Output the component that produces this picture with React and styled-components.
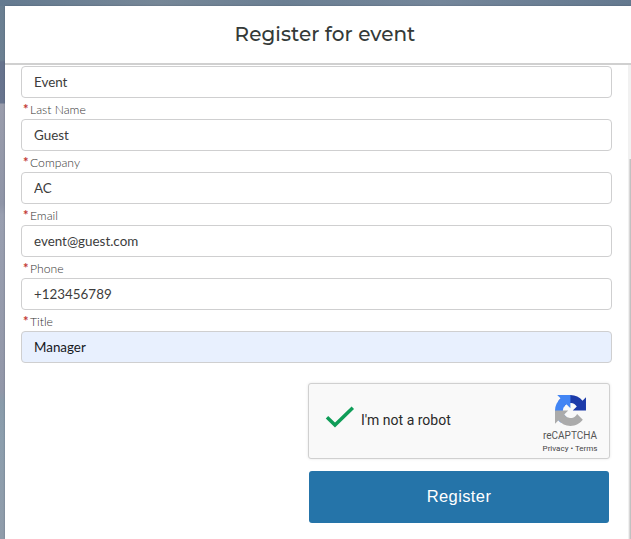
import React from "react";
import styled, { createGlobalStyle } from "styled-components";

const GlobalStyle = createGlobalStyle`
  * { box-sizing: border-box; }
  html, body { margin: 0; height: 100%; overflow: hidden; }
`;

const Backdrop = styled.div`
  width: 631px;
  height: 539px;
  padding: 6px 0 0 5px;
  overflow: hidden;
  background:
    linear-gradient(90deg, #647a90, #768797 25%, #6b7f93 45%, #74869a 70%, #64798f) top / 100% 6px no-repeat,
    linear-gradient(#697e91 0, #6c8092 60px, #66738d 62px, #68748e 103px, #9a9dac 104px, #8f95a7 204px, #999fb0 215px, #9297a8 390px, #899baa 403px, #8c9ead 440px, #909caa 539px);
`;

const Modal = styled.div`
  height: 533px;
  display: flex;
  flex-direction: column;
  background: #fff;
  box-shadow: 0 0 2px rgba(40, 50, 70, 0.35);
`;

const Header = styled.header`
  flex: none;
  height: 59px;
  display: flex;
  justify-content: center;
  border-bottom: 2px solid #d0d0d0;
`;

const Title = styled.h2`
  margin: 14px 0 0 14px;
  font: 500 20px/28px Montserrat, Inter, sans-serif;
  letter-spacing: 0.04px;
  color: #343a38;
  white-space: nowrap;
`;

const Body = styled.div`
  flex: 1;
  display: flex;
  justify-content: space-between;
`;

const Form = styled.form`
  width: 591px;
  margin: 1px 0 0 16px;
  display: flex;
  flex-direction: column;
`;

const Field = styled.label`
  display: block;
`;

const Label = styled.span`
  display: flex;
  height: 21px;
  padding-left: 2px;
  font: 300 12.2px/23px Lato, sans-serif;
  color: #333;
`;

const Required = styled.span`
  width: 7px;
  font-weight: 700;
  font-size: 13px;
  color: #c23934;
`;

const Input = styled.input`
  display: block;
  width: 100%;
  height: 32px;
  padding: 0 12px 1px;
  border: 1px solid #cfcfd0;
  border-radius: 4px;
  outline: none;
  background: ${({ $filled }) => ($filled ? "#e8f0fe" : "#fff")};
  color: ${({ $filled }) => ($filled ? "#16181d" : "#3c3c3c")};
  font: 400 13.4px/20px Lato, sans-serif;
`;

const Actions = styled.div`
  width: 304px;
  margin: 20px 0 0 287px;
  display: flex;
  flex-direction: column;
  align-items: flex-start;
  gap: 12px;
`;

const Captcha = styled.div`
  width: 302px;
  height: 76px;
  display: flex;
  border: 1px solid #d0d0d0;
  border-radius: 3px;
  background: #f9f9f9;
  box-shadow: 0 0 3px rgba(0, 0, 0, 0.1);
`;

const Check = styled.svg`
  flex: none;
  width: 30px;
  height: 24px;
  margin: 21px 0 0 16px;
`;

const CaptchaText = styled.span`
  flex: 1;
  margin: 26px 0 0 6px;
  font: 400 14px/20px Roboto, sans-serif;
  color: #2a2a2a;
`;

const Brand = styled.div`
  width: 78px;
  display: flex;
  flex-direction: column;
  align-items: center;
  font-family: Roboto, sans-serif;
  color: #555;
`;

const Logo = styled.svg`
  width: 31px;
  height: 31px;
  margin-top: 11px;
`;

const BrandName = styled.span`
  margin-top: 3px;
  font-size: 10px;
  line-height: 14px;
`;

const Links = styled.span`
  margin-top: 1px;
  font-size: 8px;
  line-height: 10px;
  white-space: nowrap;
  color: #444;
`;

const Submit = styled.button`
  width: 300px;
  height: 52px;
  margin-left: 1px;
  padding: 0 0 3px;
  border: 0;
  border-radius: 3px;
  background: #2574a9;
  color: #fff;
  font: 400 16.5px/24px "Liberation Sans", Arial, sans-serif;
  letter-spacing: 0.4px;
`;

const ScrollTrack = styled.div`
  width: 3px;
  padding: 94px 0 0 1px;
  background: #f1f1f1;
`;

const ScrollThumb = styled.div`
  height: 100%;
  background: #c1c1c1;
  border-left: 1px solid #d8d8d8;
`;

const fields = [
  { value: "Event" },
  { label: "Last Name", value: "Guest" },
  { label: "Company", value: "AC" },
  { label: "Email", value: "event@guest.com" },
  { label: "Phone", value: "+123456789" },
  { label: "Title", value: "Manager", filled: true },
];

export default function App() {
  return (
    <>
      <GlobalStyle />
      <Backdrop>
        <Modal>
          <Header>
            <Title>Register for event</Title>
          </Header>
          <Body>
            <Form onSubmit={(e) => e.preventDefault()}>
              {fields.map(({ label, value, filled }) => (
                <Field key={value}>
                  {label && (
                    <Label>
                      <Required>*</Required>
                      {label}
                    </Label>
                  )}
                  <Input defaultValue={value} $filled={filled} />
                </Field>
              ))}
              <Actions>
                <Captcha>
                  <Check viewBox="0 0 30 24">
                    <path d="M2 12.2 10 20 27.8 2.8" fill="none" stroke="#0f9d58" strokeWidth="3.5" />
                  </Check>
                  <CaptchaText>I'm not a robot</CaptchaText>
                  <Brand>
                    <Logo viewBox="0 0 64 64">
                      <path fill="#1c3aa9" d="M64 31.955l-.033-1.37V4.687l-7.16 7.16C50.948 4.674 42.033.093 32.05.093c-10.4 0-19.622 4.96-25.458 12.64l11.736 11.86a15.55 15.55 0 0 1 4.754-5.334c2.05-1.6 4.952-2.906 8.968-2.906.485 0 .86.057 1.135.163 4.976.393 9.288 3.14 11.828 7.124l-8.307 8.307L64 31.953" />
                      <path fill="#4285f4" d="M31.862.094l-1.37.033H4.594l7.16 7.16C4.58 13.147 0 22.06 0 32.046c0 10.4 4.96 19.622 12.64 25.458L24.5 45.768a15.55 15.55 0 0 1-5.334-4.754c-1.6-2.05-2.906-4.952-2.906-8.968 0-.485.057-.86.163-1.135.393-4.976 3.14-9.288 7.124-11.828l8.307 8.307L31.86.095" />
                      <path fill="#ababab" d="M.001 32.045l.033 1.37v25.898l7.16-7.16c5.86 7.173 14.774 11.754 24.76 11.754 10.4 0 19.622-4.96 25.458-12.64l-11.736-11.86a15.55 15.55 0 0 1-4.754 5.334c-2.05 1.6-4.952 2.906-8.968 2.906-.485 0-.86-.057-1.135-.163-4.976-.393-9.288-3.14-11.828-7.124l8.307-8.307c-10.522.04-22.4.066-27.295-.005" />
                    </Logo>
                    <BrandName>reCAPTCHA</BrandName>
                    <Links>Privacy • Terms</Links>
                  </Brand>
                </Captcha>
                <Submit type="submit">Register</Submit>
              </Actions>
            </Form>
            <ScrollTrack>
              <ScrollThumb />
            </ScrollTrack>
          </Body>
        </Modal>
      </Backdrop>
    </>
  );
}
